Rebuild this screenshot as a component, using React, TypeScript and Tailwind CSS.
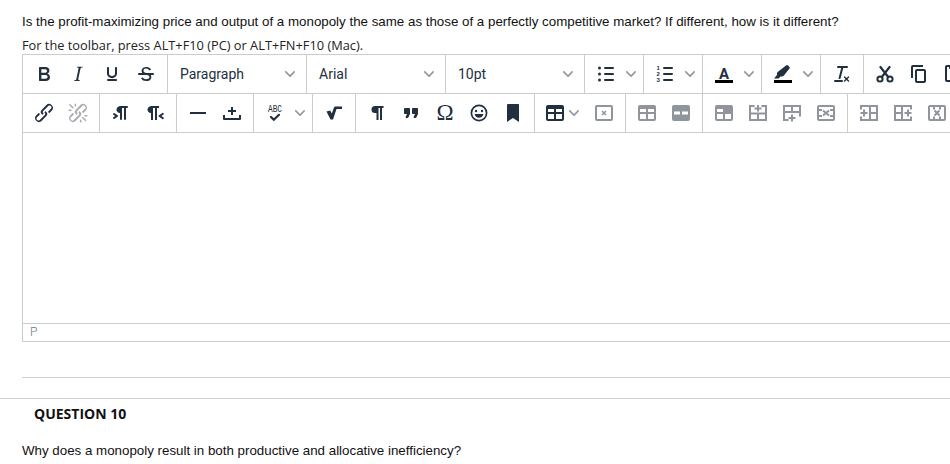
import React from "react";

const DARK = "#222f3e";
const GRAY = "#8f959d";

function Icon({ children, fill = DARK }: { children: React.ReactNode; fill?: string }) {
  return (
    <svg width="24" height="24" viewBox="0 0 24 24" fill={fill} fillRule="evenodd">
      {children}
    </svg>
  );
}

function Chevron() {
  return (
    <svg width="10" height="10" viewBox="0 0 10 10" fill="rgba(34,47,62,0.5)">
      <path d="M8.7 2.2c.3-.3.8-.3 1 0 .4.4.4.9 0 1.2L5.7 7.8c-.3.3-.9.3-1.2 0L.2 3.4a.8.8 0 0 1 0-1.2c.3-.3.8-.3 1.1 0L5 6l3.700-3.800z" />
    </svg>
  );
}

function Btn({ children }: { children: React.ReactNode }) {
  return <div className="flex h-[38px] w-[34px] shrink-0 items-center justify-center">{children}</div>;
}

function Split({ children }: { children: React.ReactNode }) {
  return (
    <>
      <Btn>{children}</Btn>
      <div className="flex h-[38px] w-4 shrink-0 items-center justify-center">
        <Chevron />
      </div>
    </>
  );
}

function Group({ children }: { children: React.ReactNode }) {
  return <div className="flex h-[38px] shrink-0 border-r border-[#cccccc] px-1">{children}</div>;
}

function Select({ label }: { label: string }) {
  return (
    <div className="flex h-[38px] w-[139px] shrink-0 items-center border-r border-[#cccccc] pl-3 pr-[11px]">
      <span className="flex-1 font-['Roboto',sans-serif] text-[14px] text-[#222f3e]">{label}</span>
      <Chevron />
    </div>
  );
}

const g = { fill: "none", stroke: GRAY, strokeWidth: 2 } as const;
const FRAME = "M5 4h14a2 2 0 0 1 2 2v12a2 2 0 0 1-2 2H5a2 2 0 0 1-2-2V6c0-1.100.9-2 2-2z";
const HOLLOW = FRAME + "M5 6v12h14V6H5z";
const CELLS = "M5 8v3h6V8H5zM13 8v3h6V8h-6zM5 13v5h6v-5H5zM13 13v5h6v-5h-6z";

function Gray({ d, children }: { d?: string; children?: React.ReactNode }) {
  return (
    <Icon fill={GRAY}>
      {d && <path d={d} />}
      {children}
    </Icon>
  );
}

const PILCROW = "M10 5H18.500V7H17V19H15V7H13.500V19H11.500V12H10a3.500 3.500 0 0 1 0-7z";
const NUM = "'Liberation Sans', sans-serif";

function RowOne() {
  return (
    <div className="flex h-[39px] border-b border-[#cccccc]">
      <Group>
        <Btn>
          <Icon>
            <path d="M7.8 19c-.3 0-.5 0-.6-.2l-.2-.5V5.7c0-.2 0-.4.2-.5l.6-.2h5c1.500 0 2.700.3 3.500 1 .7.6 1.100 1.400 1.100 2.500a3 3 0 0 1-.6 1.900c-.4.6-1 1-1.600 1.200.4.1.9.3 1.300.6s.8.7 1 1.200c.4.4.5 1 .5 1.600 0 1.300-.4 2.300-1.300 3-.8.7-2.100 1-3.800 1H7.800zm5-8.300c.6 0 1.200-.1 1.600-.5.4-.3.6-.7.6-1.300 0-1.100-.8-1.700-2.300-1.700H9.300v3.500h3.400zm.5 6c.7 0 1.300-.1 1.700-.4.4-.4.6-.9.6-1.500s-.2-1-.7-1.400c-.4-.3-1-.4-2-.4H9.400v3.800h4z" />
          </Icon>
        </Btn>
        <Btn>
          <Icon>
            <path d="M16.7 4.700l-.1.9h-.3c-.6 0-1 0-1.400.3-.3.3-.4.6-.5 1.100l-2.100 9.800v.6c0 .5.4.8 1.400.8h.2l-.2.8H8l.2-.8h.2c1.100 0 1.800-.5 2-1.500l2-9.800.1-.5c0-.6-.4-.8-1.400-.8h-.3l.2-.9h5.800z" />
          </Icon>
        </Btn>
        <Btn>
          <Icon>
            <path d="M16 5c.6 0 1 .4 1 1v5.500a4 4 0 0 1-.4 1.800l-1 1.400a5.300 5.300 0 0 1-5.500 1 5 5 0 0 1-1.600-1c-.5-.4-.8-.9-1.100-1.400a4 4 0 0 1-.4-1.800V6c0-.6.4-1 1-1s1 .4 1 1v5.500c0 .3 0 .6.2 1l.6.7a3.300 3.300 0 0 0 2.200.8 3.400 3.400 0 0 0 2.200-.8c.3-.2.4-.5.6-.8l.2-.9V6c0-.6.4-1 1-1zM8 17h8c.6 0 1 .4 1 1s-.4 1-1 1H8a1 1 0 0 1 0-2z" />
          </Icon>
        </Btn>
        <Btn>
          <Icon>
            <path d="M15.600 8.500c-.5-.7-1-1.100-1.300-1.300-.6-.4-1.300-.6-2-.6-2.700 0-2.800 1.700-2.800 2.100 0 1.600 1.800 2 3.200 2.300 4.400.9 4.600 2.800 4.600 3.900 0 1.400-.7 4.100-5 4.100A6.200 6.200 0 0 1 7 16.400l1.500-1.100c.4.6 1.600 2 3.700 2 1.600 0 2.500-.4 3-1.200.4-.8.3-2-.8-2.600-.7-.4-1.600-.7-2.900-1-1-.2-3.900-.8-3.900-3.600C7.600 6 10.300 5 12.400 5c2.900 0 4.200 1.600 4.700 2.400l-1.500 1.100z" />
            <path d="M5 11h14a1 1 0 0 1 0 2H5a1 1 0 0 1 0-2z" />
          </Icon>
        </Btn>
      </Group>
      <Select label="Paragraph" />
      <Select label="Arial" />
      <Select label="10pt" />
      <Group>
        <Split>
          <Icon>
            <circle cx="5.500" cy="6" r="1.500" />
            <circle cx="5.500" cy="12" r="1.500" />
            <circle cx="5.500" cy="18" r="1.500" />
            <rect x="10" y="5" width="10" height="2" rx="1" />
            <rect x="10" y="11" width="10" height="2" rx="1" />
            <rect x="10" y="17" width="10" height="2" rx="1" />
          </Icon>
        </Split>
      </Group>
      <Group>
        <Split>
          <Icon>
            <text x="3.500" y="8" fontSize="6" fontWeight="700" fontFamily={NUM}>1</text>
            <text x="3.500" y="14" fontSize="6" fontWeight="700" fontFamily={NUM}>2</text>
            <text x="3.500" y="20" fontSize="6" fontWeight="700" fontFamily={NUM}>3</text>
            <rect x="10" y="5" width="10" height="2" rx="1" />
            <rect x="10" y="11" width="10" height="2" rx="1" />
            <rect x="10" y="17" width="10" height="2" rx="1" />
          </Icon>
        </Split>
      </Group>
      <Group>
        <Split>
          <Icon>
            <text x="12" y="17" textAnchor="middle" fontSize="15" fontWeight="700" fontFamily="Roboto, sans-serif">A</text>
            <rect x="3" y="18" width="18" height="3" fill="#000000" />
          </Icon>
        </Split>
      </Group>
      <Group>
        <Split>
          <Icon>
            <path d="M15 3.500a1.500 1.500 0 0 1 2.100 0l1.200 1.200a1.500 1.500 0 0 1 0 2.100l-5.600 6.900c-.5.5-1.100.7-1.800.7H9.500l-1.800 2.100H3l3-3.400v-1.500c0-.6.2-1.200.7-1.700z" />
            <rect x="3" y="18" width="18" height="3" fill="#000000" />
          </Icon>
        </Split>
      </Group>
      <Group>
        <Btn>
          <Icon>
            <path d="M13.200 6a1 1 0 0 1 0 .2l-2.600 10a1 1 0 0 1-1 .8h-.2a.8.8 0 0 1-.8-1l2.600-10H8a1 1 0 1 1 0-2h9a1 1 0 0 1 0 2h-3.800zM5 18h7a1 1 0 0 1 0 2H5a1 1 0 0 1 0-2zm13 1.500L16.500 18 15 19.500a.7.7 0 0 1-1-1l1.500-1.500-1.500-1.500a.7.7 0 0 1 1-1l1.500 1.500 1.500-1.500a.7.7 0 0 1 1 1L17.500 17l1.500 1.500a.7.7 0 0 1-1 1z" />
          </Icon>
        </Btn>
      </Group>
      <Group>
        <Btn>
          <Icon>
            <circle cx="7" cy="17" r="2.600" fill="none" stroke={DARK} strokeWidth="2" />
            <circle cx="17" cy="17" r="2.600" fill="none" stroke={DARK} strokeWidth="2" />
            <path d="M8.800 15 L16.600 5 M15.200 15 L7.400 5" fill="none" stroke={DARK} strokeWidth="2.200" strokeLinecap="round" />
          </Icon>
        </Btn>
        <Btn>
          <Icon>
            <path d="M16 3H6a2 2 0 0 0-2 2v11h2V5h10V3zm1 4a2 2 0 0 1 2 2v10a2 2 0 0 1-2 2h-7a2 2 0 0 1-2-2V9c0-1.200.9-2 2-2h7zm0 12V9h-7v10h7z" />
          </Icon>
        </Btn>
        <Btn>
          <Icon>
            <path d="M18 9V5h-2v1c0 .6-.4 1-1 1H9a1 1 0 0 1-1-1V5H6v13h3V9h9zM9 20H6a2 2 0 0 1-2-2V5c0-1.100.9-2 2-2h3.200A3 3 0 0 1 12 1a3 3 0 0 1 2.800 2H18a2 2 0 0 1 2 2v4h1v12H9v-1zm1.500-9.500v9h9v-9h-9z" />
          </Icon>
        </Btn>
      </Group>
    </div>
  );
}

function RowTwo() {
  return (
    <div className="flex h-[39px] border-b border-[#cccccc]">
      <Group>
        <Btn>
          <Icon>
            <path d="M6.200 12.300a1 1 0 0 1 1.400 1.400l-2 2a2 2 0 1 0 2.600 2.800l4.800-4.800a1 1 0 0 0 0-1.400 1 1 0 1 1 1.400-1.300 2.900 2.900 0 0 1 0 4L9.600 20a3.900 3.900 0 0 1-5.500-5.500l2-2zm11.600-.6a1 1 0 0 1-1.400-1.400l2-2a2 2 0 1 0-2.600-2.800L11 10.300a1 1 0 0 0 0 1.400A1 1 0 1 1 9.600 13a2.900 2.900 0 0 1 0-4L14.400 4a3.900 3.900 0 0 1 5.500 5.500l-2 2z" />
          </Icon>
        </Btn>
        <Btn>
          <Icon fill="rgba(34,47,62,0.4)">
            <path d="M6.200 12.300a1 1 0 0 1 1.400 1.400l-2.100 2a2 2 0 1 0 2.700 2.800l4.800-4.800a1 1 0 0 0 0-1.400 1 1 0 1 1 1.400-1.300 2.900 2.900 0 0 1 0 4L9.600 20a3.900 3.900 0 0 1-5.500-5.500l2-2zm11.600-.6a1 1 0 0 1-1.400-1.400l2.100-2a2 2 0 1 0-2.700-2.800L11 10.300a1 1 0 0 0 0 1.400A1 1 0 1 1 9.600 13a2.900 2.900 0 0 1 0-4L14.400 4a3.900 3.900 0 0 1 5.500 5.500l-2 2zM7.600 6.300a.8.8 0 0 1-1 1.100L3.300 4.200a.7.7 0 1 1 1-1l3.200 3.100zM5.100 8.600a.8.8 0 0 1 0 1.500H3a.8.8 0 0 1 0-1.500H5zm5-3.500a.8.8 0 0 1-1.500 0V3a.8.8 0 0 1 1.500 0v2zm6 11.800a.8.8 0 0 1 1-1l3.200 3.200a.8.8 0 0 1-1 1L16 17zm-2.200 2a.8.8 0 0 1 1.500 0V21a.8.8 0 0 1-1.500 0V19zm5-3.500a.7.7 0 1 1 0-1.500H21a.8.8 0 0 1 0 1.500H19z" />
          </Icon>
        </Btn>
      </Group>
      <Group>
        <Btn>
          <Icon>
            <path d="M11 5h7a1 1 0 0 1 0 2h-1v11a1 1 0 0 1-2 0V7h-2v11a1 1 0 0 1-2 0v-6c-.5 0-1 0-1.400-.3A3.400 3.400 0 0 1 7.800 10a3.300 3.300 0 0 1 0-2.800 3.400 3.400 0 0 1 1.800-1.800L11 5zM4.400 16.200L6.200 15l-1.800-1.200a1 1 0 0 1 1.200-1.600l3 2a1 1 0 0 1 0 1.600l-3 2a1 1 0 1 1-1.200-1.600z" />
          </Icon>
        </Btn>
        <Btn>
          <Icon>
            <path d="M8 5h8v2h-2v12h-2V7h-2v12H8v-7c-.5 0-1 0-1.400-.3A3.400 3.400 0 0 1 4.800 10a3.300 3.300 0 0 1 0-2.800 3.400 3.400 0 0 1 1.800-1.800L8 5zm12 11.200a1 1 0 1 1-1 1.600l-3-2a1 1 0 0 1 0-1.600l3-2a1 1 0 1 1 1 1.600L18.400 15l1.800 1.200z" />
          </Icon>
        </Btn>
      </Group>
      <Group>
        <Btn>
          <Icon>
            <rect x="4" y="11" width="16" height="2" />
          </Icon>
        </Btn>
        <Btn>
          <Icon>
            <path d="M5 17h14v-3h2v4a1 1 0 0 1-1 1H4a1 1 0 0 1-1-1v-4h2v3zm8-8h3v2h-3v3h-2v-3H8V9h3V6h2v3z" />
          </Icon>
        </Btn>
      </Group>
      <Group>
        <Split>
          <Icon>
            <text x="12" y="11" textAnchor="middle" fontSize="10.500" fontFamily="'Liberation Mono', monospace" textLength="14" lengthAdjust="spacingAndGlyphs">ABC</text>
            <path d="M8 16l2.800 2.800 5.200-5" fill="none" stroke={DARK} strokeWidth="2.200" strokeLinecap="round" />
          </Icon>
        </Split>
      </Group>
      <Group>
        <Btn>
          <Icon>
            <path d="M4.500 10.500L8.200 9.500L9.800 12.500L12 6.500Q12.300 5.600 13.300 5.600H20V8H14.500L11 18.500H8.500Z" />
          </Icon>
        </Btn>
      </Group>
      <Group>
        <Btn>
          <Icon>
            <path d={PILCROW} />
          </Icon>
        </Btn>
        <Btn>
          <Icon>
            <path d="M7.500 17h.9c.4 0 .7-.2.9-.6L11 13V8c0-.6-.4-1-1-1H6a1 1 0 0 0-1 1v4c0 .6.4 1 1 1h2l-1.300 2.700a1 1 0 0 0 .8 1.300zm8 0h.9c.4 0 .7-.2.9-.6L19 13V8c0-.6-.4-1-1-1h-4a1 1 0 0 0-1 1v4c0 .6.4 1 1 1h2l-1.300 2.700a1 1 0 0 0 .8 1.300z" />
          </Icon>
        </Btn>
        <Btn>
          <Icon>
            <text x="12" y="19" textAnchor="middle" fontSize="23" fontFamily="'Liberation Serif', serif">Ω</text>
          </Icon>
        </Btn>
        <Btn>
          <Icon>
            <circle cx="12" cy="12" r="7.600" fill="none" stroke={DARK} strokeWidth="1.700" />
            <circle cx="9" cy="10" r="1.200" />
            <circle cx="15" cy="10" r="1.200" />
            <path d="M7.600 13h8.800c-.3 2.400-2.100 3.800-4.400 3.800s-4.100-1.400-4.400-3.800z" />
          </Icon>
        </Btn>
        <Btn>
          <Icon>
            <path d="M6 4v17l6-4 6 4V4c0-.6-.4-1-1-1H7a1 1 0 0 0-1 1z" />
          </Icon>
        </Btn>
      </Group>
      <Group>
        <div className="flex h-[38px] w-12 shrink-0 items-center gap-0.5 pl-1">
          <Icon>
            <path d={FRAME + CELLS} />
          </Icon>
          <Chevron />
        </div>
        <Btn>
          <Gray d={HOLLOW}>
            <path d="M10 10l4 4M14 10l-4 4" {...g} strokeWidth={1.500} />
          </Gray>
        </Btn>
      </Group>
      <Group>
        <Btn>
          <Gray d={FRAME + CELLS} />
        </Btn>
        <Btn>
          <Gray d={FRAME + "M5 10.500v3h6v-3H5zM13 10.500v3h6v-3h-6z"} />
        </Btn>
      </Group>
      <Group>
        <Btn>
          <Gray d={FRAME + "M5 8v3h6V8H5zM5 13v5h6v-5H5zM13 13v5h6v-5h-6z"} />
        </Btn>
        <Btn>
          <Gray>
            <path d="M8.500 5H4V19H20V5H15.500M4 12.500h16M12 12.500V19M12 4v6.500M8.500 7.500h7" {...g} />
          </Gray>
        </Btn>
        <Btn>
          <Gray>
            <path d="M8.500 19H4V5H20V15.500M4 11h16M12 5v6M12 13.500v7M8.500 17h7" {...g} />
          </Gray>
        </Btn>
        <Btn>
          <Gray d={HOLLOW}>
            <path d="M9 9.500l6 5M15 9.500l-6 5" {...g} />
            <path d="M5 8h3v2H5zM5 14h3v2H5zM16 8h3v2h-3zM16 14h3v2h-3z" />
          </Gray>
        </Btn>
      </Group>
      <Group>
        <Btn>
          <Gray>
            <path d="M4 8.500V5H20V19H4V15.500M13 5v14M13 12h7M3.500 12h7M7 8.500v7" {...g} />
          </Gray>
        </Btn>
        <Btn>
          <Gray>
            <path d="M20 8.500V5H4V19H20V15.500M11 5v14M4 12h7M13.500 12h7M17 8.500v7" {...g} />
          </Gray>
        </Btn>
        <Btn>
          <Gray d={HOLLOW}>
            <path d="M9.500 9.500l5 5M14.500 9.500l-5 5" {...g} />
            <path d="M8 6h2v2.500H8zM14 6h2v2.500h-2zM8 15.500h2V18H8zM14 15.500h2V18h-2z" />
          </Gray>
        </Btn>
      </Group>
    </div>
  );
}

export default function App() {
  return (
    <div className="h-[464px] w-[950px] overflow-hidden bg-white font-['Liberation_Sans',Arial,sans-serif] text-[13.33px] text-[#111111]">
      <p className="pl-[22px] pt-[14px] leading-[16px]">
        Is the profit-maximizing price and output of a monopoly the same as those of a perfectly competitive market? If different, how is it different?
      </p>
      <p className="mt-[7px] pl-[22px] font-['Open_Sans',sans-serif] text-[12.8px] leading-[17px] text-[#222222]">
        For the toolbar, press ALT+F10 (PC) or ALT+FN+F10 (Mac).
      </p>
      <div className="ml-[22px] w-[1000px] border-y border-l border-[#cccccc]">
        <RowOne />
        <RowTwo />
        <div className="h-[191px] border-b border-[#cccccc]" />
        <div className="h-[17px] pl-[7px] font-['Roboto',sans-serif] text-[12px] font-light leading-[17px] text-[#6f7780]">P</div>
      </div>
      <div className="ml-[22px] mt-[35px] h-px bg-[#d0d0d0]" />
      <div className="mt-5 h-px bg-[#d0d0d0]" />
      <h2 className="mt-[5px] pl-[34px] font-['Open_Sans',sans-serif] text-[14px] font-bold leading-[20px] text-[#111111]">QUESTION 10</h2>
      <p className="mt-[19px] pl-[22px] leading-[16px]">Why does a monopoly result in both productive and allocative inefficiency?</p>
    </div>
  );
}
